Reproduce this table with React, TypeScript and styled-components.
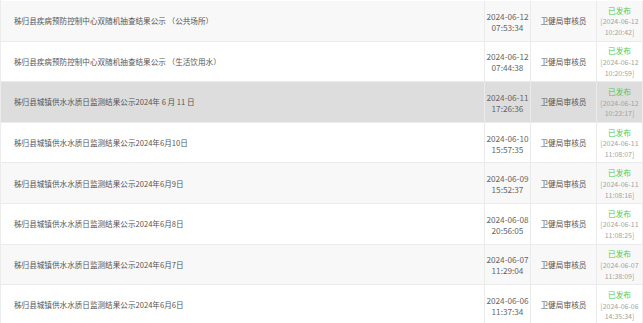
import React from 'react';
import styled, { createGlobalStyle } from 'styled-components';

const GlobalStyle = createGlobalStyle`
  html, body {
    margin: 0;
    padding: 0;
    background: #fff;
    overflow: hidden;
  }
  body {
    font-family: "Noto Sans CJK SC", "Microsoft YaHei", sans-serif;
  }
`;

interface Row {
  title: string;
  date: string;
  time: string;
  reviewer: string;
  pubDate: string;
  pubTime: string;
}

const rows: Row[] = [
  { title: '秭归县疾病预防控制中心双随机抽查结果公示 （公共场所）', date: '2024-06-12', time: '07:53:34', reviewer: '卫健局审核员', pubDate: '2024-06-12', pubTime: '10:20:42' },
  { title: '秭归县疾病预防控制中心双随机抽查结果公示 （生活饮用水）', date: '2024-06-12', time: '07:44:38', reviewer: '卫健局审核员', pubDate: '2024-06-12', pubTime: '10:20:59' },
  { title: '秭归县城镇供水水质日监测结果公示2024年 6 月 11 日', date: '2024-06-11', time: '17:26:36', reviewer: '卫健局审核员', pubDate: '2024-06-12', pubTime: '10:23:17' },
  { title: '秭归县城镇供水水质日监测结果公示2024年6月10日', date: '2024-06-10', time: '15:57:35', reviewer: '卫健局审核员', pubDate: '2024-06-11', pubTime: '11:08:07' },
  { title: '秭归县城镇供水水质日监测结果公示2024年6月9日', date: '2024-06-09', time: '15:52:37', reviewer: '卫健局审核员', pubDate: '2024-06-11', pubTime: '11:08:16' },
  { title: '秭归县城镇供水水质日监测结果公示2024年6月8日', date: '2024-06-08', time: '20:56:05', reviewer: '卫健局审核员', pubDate: '2024-06-11', pubTime: '11:08:25' },
  { title: '秭归县城镇供水水质日监测结果公示2024年6月7日', date: '2024-06-07', time: '11:29:04', reviewer: '卫健局审核员', pubDate: '2024-06-07', pubTime: '11:38:09' },
  { title: '秭归县城镇供水水质日监测结果公示2024年6月6日', date: '2024-06-06', time: '11:37:34', reviewer: '卫健局审核员', pubDate: '2024-06-06', pubTime: '14:35:34' },
];

// 3번째 줄은 마우스 올린 상태
const HOVER_INDEX = 2;

const App = () => {
  return (
    <>
      <GlobalStyle />
      <List>
        {rows.map((row, i) => (
          <Line key={i} striped={i % 2 === 0} hovered={i === HOVER_INDEX}>
            <TitleCell>{row.title}</TitleCell>
            <DateCell>
              <span>{row.date}</span>
              <span>{row.time}</span>
            </DateCell>
            <ReviewerCell>{row.reviewer}</ReviewerCell>
            <StatusCell>
              <span className="state">已发布</span>
              <span className="stamp">[{row.pubDate}</span>
              <span className="stamp">{row.pubTime}]</span>
            </StatusCell>
          </Line>
        ))}
      </List>
    </>
  );
};

export default App;

const List = styled.div`
  width: 643px;
  padding-top: 1px;
  border-left: 1px solid #ececec;
  box-sizing: border-box;
`;

const Line = styled.div<{ striped: boolean; hovered: boolean }>`
  display: grid;
  grid-template-columns: 484px 46px 66px 46px;
  height: 40.6px;
  box-sizing: border-box;
  border-bottom: 1px solid #ebebeb;
  background: ${(props) =>
    props.hovered ? '#dddddd' : props.striped ? '#f8f8f8' : '#ffffff'};
  & > div {
    border-right: 1px solid #ebebeb;
    box-sizing: border-box;
  }
`;

const TitleCell = styled.div`
  display: flex;
  align-items: center;
  padding-left: 13px;
  font-size: 7.6px;
  color: #555;
  white-space: nowrap;
`;

const DateCell = styled.div`
  display: flex;
  flex-direction: column;
  align-items: center;
  justify-content: center;
  font-size: 8.2px;
  line-height: 11px;
  color: #666;
  white-space: nowrap;
  padding-top: 2px;
`;

const ReviewerCell = styled.div`
  display: flex;
  align-items: center;
  justify-content: center;
  font-size: 7.7px;
  color: #555;
  white-space: nowrap;
`;

const StatusCell = styled.div`
  display: flex;
  flex-direction: column;
  align-items: center;
  justify-content: center;
  line-height: 10.7px;
  white-space: nowrap;
  padding-top: 2px;
  .state {
    font-size: 7.7px;
    color: #4fc94f;
  }
  .stamp {
    font-size: 7px;
    color: #a3a3a3;
  }
`;
